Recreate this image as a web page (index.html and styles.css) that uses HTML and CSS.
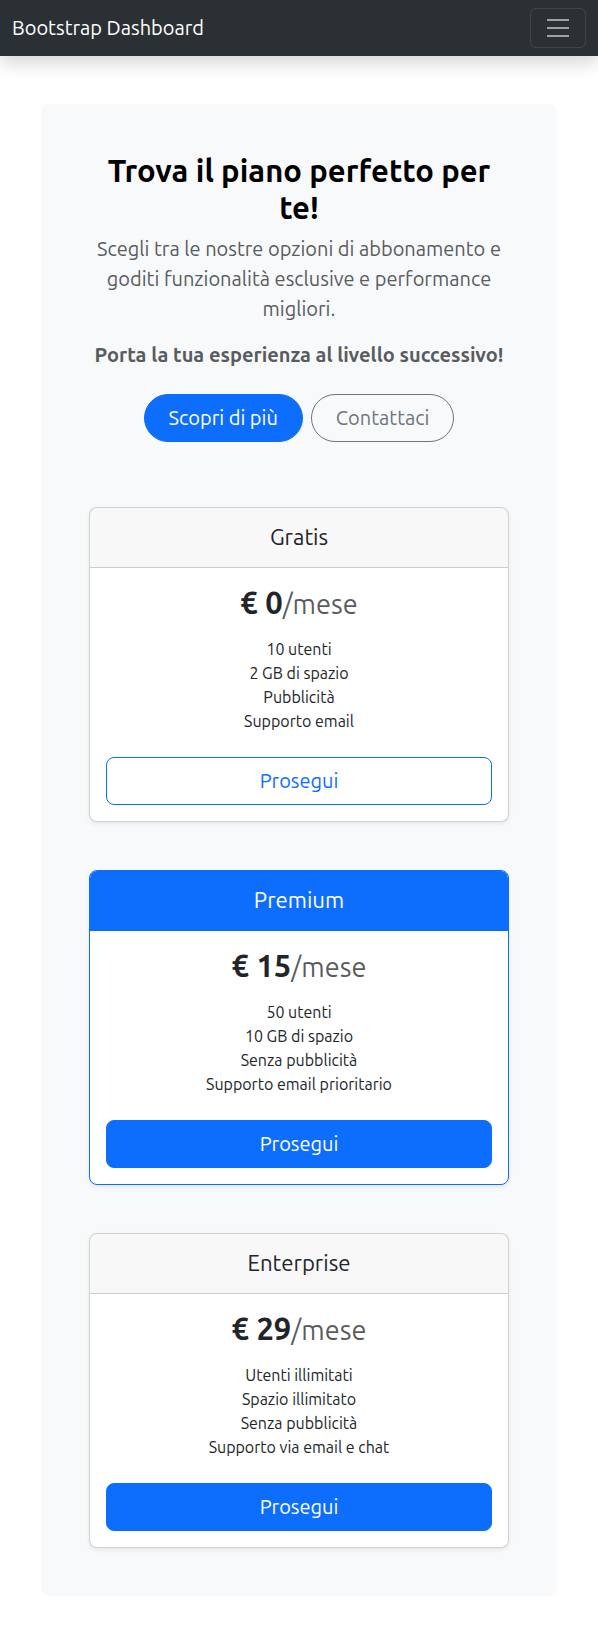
FILE: index.html
```html
<!DOCTYPE html>
<html lang="it">
<head>
<meta charset="utf-8">
<title>Bootstrap Dashboard</title>
<link rel="stylesheet" href="styles.css">
</head>
<body>
<nav class="navbar">
  <a class="brand" href="#">Bootstrap Dashboard</a>
  <button class="toggler" type="button" aria-label="Menu">
    <svg width="30" height="30" viewBox="0 0 30 30"><path stroke="rgba(255,255,255,0.55)" stroke-linecap="butt" stroke-width="2" d="M4 7h22M4 15h22M4 23h22"/></svg>
  </button>
</nav>
<main class="container">
  <section class="panel">
    <header class="intro">
      <h1 class="title">Trova il piano perfetto per te!</h1>
      <p class="lead">Scegli tra le nostre opzioni di abbonamento e goditi funzionalità esclusive e performance migliori.</p>
      <p class="lead-strong">Porta la tua esperienza al livello successivo!</p>
      <div class="actions">
        <a class="btn btn-pill btn-primary" href="#">Scopri di più</a>
        <a class="btn btn-pill btn-outline-secondary" href="#">Contattaci</a>
      </div>
    </header>
    <div class="plans">
      <div class="card">
        <div class="card-header"><h4 class="plan-name">Gratis</h4></div>
        <div class="card-body">
          <h1 class="price">€ 0<small class="per">/mese</small></h1>
          <ul class="features">
            <li>10 utenti</li>
            <li>2 GB di spazio</li>
            <li>Pubblicità</li>
            <li>Supporto email</li>
          </ul>
          <button class="btn btn-block btn-outline-primary" type="button">Prosegui</button>
        </div>
      </div>
      <div class="card card-primary">
        <div class="card-header header-primary"><h4 class="plan-name">Premium</h4></div>
        <div class="card-body">
          <h1 class="price">€ 15<small class="per">/mese</small></h1>
          <ul class="features">
            <li>50 utenti</li>
            <li>10 GB di spazio</li>
            <li>Senza pubblicità</li>
            <li>Supporto email prioritario</li>
          </ul>
          <button class="btn btn-block btn-primary" type="button">Prosegui</button>
        </div>
      </div>
      <div class="card">
        <div class="card-header"><h4 class="plan-name">Enterprise</h4></div>
        <div class="card-body">
          <h1 class="price">€ 29<small class="per">/mese</small></h1>
          <ul class="features">
            <li>Utenti illimitati</li>
            <li>Spazio illimitato</li>
            <li>Senza pubblicità</li>
            <li>Supporto via email e chat</li>
          </ul>
          <button class="btn btn-block btn-primary" type="button">Prosegui</button>
        </div>
      </div>
    </div>
  </section>
</main>
</body>
</html>
```
FILE: styles.css
```css
* { box-sizing: border-box; }
html, body { margin: 0; padding: 0; }
body {
  font-family: "Ubuntu", Roboto, "Noto Sans", sans-serif;
  font-size: 16px;
  line-height: 1.5;
  color: #212529;
  background: #fff;
}
.navbar {
  height: 56px;
  background: #2b3035;
  display: flex;
  align-items: center;
  justify-content: space-between;
  padding: 8px 12px;
  box-shadow: 0 8px 16px rgba(0,0,0,0.15);
  position: relative;
  z-index: 1;
}
.brand {
  color: #fff;
  text-decoration: none;
  font-size: 20px;
  line-height: 30px;
  padding: 5px 0;
}
.toggler {
  width: 56px;
  height: 40px;
  padding: 4px 12px;
  background: transparent;
  border: 1px solid rgba(255,255,255,0.1);
  border-radius: 6px;
  display: flex;
  align-items: center;
  justify-content: center;
}
.toggler svg { display: block; }
.container {
  width: 540px;
  margin: 48px auto 48px;
  padding: 0 12px;
}
.panel {
  background: #f8f9fa;
  border-radius: 8px;
  padding: 48px;
}
.intro { text-align: center; margin-bottom: 65px; }
.title {
  margin: 0 0 8px;
  font-size: 31px;
  line-height: 1.2;
  font-weight: 700;
  color: #000;
}
.lead {
  margin: 0 0 16px;
  font-size: 20px;
  line-height: 30px;
  font-weight: 400;
  color: #595c5f;
}
.lead-strong {
  margin: 0 0 24px;
  font-size: 20px;
  line-height: 30px;
  font-weight: 700;
  color: #595c5f;
}
.actions {
  display: flex;
  justify-content: center;
  gap: 8px;
}
.btn {
  display: inline-block;
  font-family: inherit;
  font-size: 20px;
  line-height: 30px;
  padding: 8px 16px;
  border: 1px solid transparent;
  border-radius: 8px;
  text-decoration: none;
  text-align: center;
  cursor: pointer;
}
.btn-pill { border-radius: 50rem; padding: 8px 24px; }
.btn-primary { background: #0d6efd; border-color: #0d6efd; color: #fff; }
.btn-outline-secondary { background: transparent; border-color: #6c757d; color: #6c757d; }
.btn-outline-primary { background: transparent; border-color: #0d6efd; color: #0d6efd; }
.btn-block { display: block; width: 100%; }
.plans {
  display: flex;
  flex-direction: column;
  gap: 48px;
}
.card {
  background: #fff;
  border: 1px solid rgba(0,0,0,0.175);
  border-radius: 8px;
  box-shadow: 0 2px 4px rgba(0,0,0,0.075);
  text-align: center;
  overflow: hidden;
}
.card-primary { border-color: #0d6efd; }
.card-header {
  background: rgba(33,37,41,0.03);
  border-bottom: 1px solid rgba(0,0,0,0.175);
  padding: 16px;
}
.header-primary {
  background: #0d6efd;
  border-bottom-color: #0d6efd;
  color: #fff;
}
.plan-name {
  margin: 0;
  font-size: 22.2px;
  line-height: 1.2;
  font-weight: 400;
}
.card-body { padding: 16px; }
.price {
  margin: 0;
  font-size: 31px;
  line-height: 1.2;
  font-weight: 700;
  color: #212529;
}
.per {
  font-size: 0.875em;
  font-weight: 400;
  color: rgba(33,37,41,0.75);
}
.features {
  list-style: none;
  margin: 16px 0 24px;
  padding: 0;
}
```
